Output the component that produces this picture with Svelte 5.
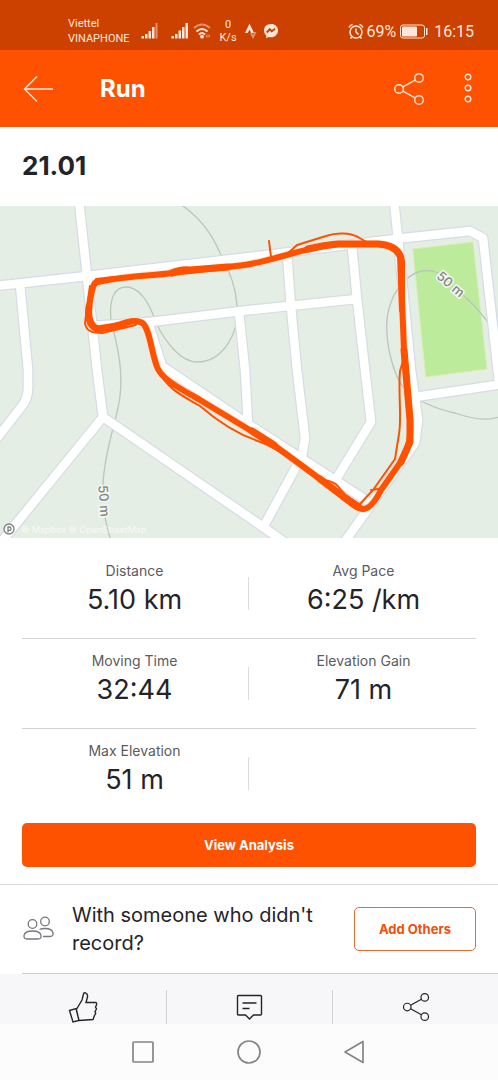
<script lang="ts">
    type Stat = { label: string; value: string };

    const rows: (Stat | null)[][] = [
        [{ label: 'Distance', value: '5.10 km' }, { label: 'Avg Pace', value: '6:25 /km' }],
        [{ label: 'Moving Time', value: '32:44' }, { label: 'Elevation Gain', value: '71 m' }],
        [{ label: 'Max Elevation', value: '51 m' }, null]
    ];

    const roads = [
        'M-5 80L87 70L250 51L395 33L470 25L483 32L499 175',
        'M79 -5L87 70L97 164L103 211L-2 340',
        'M20 78L28 164V182Q28 192 22 200L-6 236',
        'M103 211L250 312L290 340',
        'M92 120L150 116L250 104L357 93',
        'M148 116L162 160L251 220L366 294',
        'M239 106L245 164L248 218',
        'M287 48L291 101L297 164L305 232L302 250L265 318',
        'M352 40L357 93L365 164L371 216L338 270',
        'M394 -5L398 33L411 164L418 214L415 237L343 338',
        'M415 191L503 178'
    ];

    const loop =
        'M95 77C112 71 150 70 173 67C203 63 235 61 250 58C275 54 310 40 338 38H378C392 39 400 43 402 55L402 94L404 144L410 214C411 231 410 239 400 257L381 284C376 294 370 303 363 303C355 303 345 291 328 279L301 259L271 237L248 223L200 194C183 184 164 175 158 163C151 149 150 117 140 116C131 112 118 121 100 123C90 123 87 114 89 101C91 91 91 83 95 77z';
</script>

{#snippet shareIcon()}
    <svg class="share" width="32" height="34" viewBox="0 0 32 34" aria-hidden="true">
        <circle cx="6" cy="17" r="4.3" />
        <circle cx="26" cy="6" r="4.3" />
        <circle cx="26" cy="28" r="4.3" />
        <path d="M9.8 14.9L22.2 8.1M9.8 19.1L22.2 25.9" />
    </svg>
{/snippet}

<div class="status">
    <div class="carriers">
        <span>Viettel</span>
        <span>VINAPHONE</span>
    </div>
    <svg class="signal" width="18" height="16" viewBox="0 0 18 16" aria-hidden="true">
        <path d="M0.5 13h2.5v2.500h-2.500zM4 11h2.500v4.500h-2.500zM7.500 8h2.500v7.500h-2.500zM11 4h2.500v11.500h-2.500z" />
        <path class="dim" d="M14.500 0h2v15.500h-2z" />
    </svg>
    <svg class="signal second" width="18" height="16" viewBox="0 0 18 16" aria-hidden="true">
        <path d="M0.5 13h2.500v2.500h-2.500zM4 11h2.500v4.500h-2.500zM7.500 7.500h2.500v8h-2.500zM11 4h2.500v11.500h-2.500zM14.500 0h2.500v15.500h-2.500z" />
    </svg>
    <svg width="20" height="16" viewBox="0 0 20 16" aria-hidden="true">
        <path class="line dim" d="M1 5Q9 -2 17 5" />
        <path class="line" d="M3.500 8.500Q9 3.500 14.500 8.500M6 11.500Q9 8.500 12 11.500" />
        <circle cx="9" cy="13.700" r="1.900" />
        <path class="dim" d="M12.500 13l2-2v4zM17.500 13l-2-2v4z" />
    </svg>
    <div class="speed">
        <span>0</span>
        <span>K/s</span>
    </div>
    <svg class="strava" width="12" height="16" viewBox="0 0 12 16" aria-hidden="true">
        <path d="M0 10L4.500 0.500L9 10H6.200L4.500 6.500L2.800 10z" />
        <path class="dim" d="M5 10H7L8 12L9.300 9H11.500L8 16z" />
    </svg>
    <svg width="16" height="16" viewBox="0 0 16 16" aria-hidden="true">
        <path d="M8 1C4 1 1 3.800 1 7.500C1 9.600 1.900 11.300 3.300 12.500V15.200L5.500 14C6.300 14.200 7.100 14.300 8 14.300C12 14.300 15 11.400 15 7.500S12 1 8 1z" />
        <path class="bolt" d="M3.800 9.500L6.700 6.300L8.800 8.300L12 5.800" />
    </svg>
    <div class="right">
        <svg class="alarm" width="16" height="17" viewBox="0 0 16 17" aria-hidden="true">
            <circle cx="8" cy="9" r="6" />
            <path d="M8 5.500V9L10.500 11.500M1 4.500Q2 2 4.500 1.500M15 4.500Q14 2 11.500 1.500M4 13.500L2.500 15.500M12 13.500L13.500 15.500" />
        </svg>
        <span>69%</span>
        <svg class="battery" width="28" height="15" viewBox="0 0 28 15" aria-hidden="true">
            <rect class="case" x="0.5" y="1" width="24" height="13" rx="2.5" />
            <rect x="2" y="2.5" width="15" height="10" rx="1" />
            <path d="M26 4h1.500v7h-1.500z" />
        </svg>
        <span class="time">16:15</span>
    </div>
</div>

<header>
    <button aria-label="Back">
        <svg width="32" height="28" viewBox="0 0 32 28" aria-hidden="true">
            <path d="M30 14H1.500M14 1.500L1.500 14L14 26.500" />
        </svg>
    </button>
    <h1>Run</h1>
    <button aria-label="Share">{@render shareIcon()}</button>
    <button class="more" aria-label="More options">
        <svg width="12" height="32" viewBox="0 0 12 32" aria-hidden="true">
            <circle cx="6" cy="4" r="2.8" />
            <circle cx="6" cy="15" r="2.8" />
            <circle cx="6" cy="26" r="2.8" />
        </svg>
    </button>
</header>

<main>
    <h2>21.01</h2>

    <svg class="map" viewBox="0 0 498 332" role="img" aria-label="Route map">
        <path class="pitch" d="M413 43L473 36L487 163L426 171z" />
        <g class="contour">
            <path d="M183 0C200 12 212 28 220 47C231 67 236 84 237 99C240 128 222 156 197 156C181 156 166 137 156 117C149 94 138 81 126 81C113 81 109 96 111 113C114 129 124 159 120 190C118 211 104 245 103 279M105 312L110 332" />
            <path d="M438 67C427 62 416 65 408 72C392 84 385 108 387 128C388 146 395 171 403 181C413 193 435 203 455 207C472 213 487 215 499 211M463 89C473 97 480 106 487 115" />
        </g>
        {#each roads as d}
            <path class="casing" {d} />
        {/each}
        {#each roads as d}
            <path class="road" {d} />
        {/each}
        <g class="contour-label">
            <text transform="translate(450 79) rotate(40)">50 m</text>
            <text transform="translate(103 295) rotate(86)">50 m</text>
        </g>
        <path class="halo" d={loop} />
        <g class="route">
            <path class="main" d={loop} />
            <path class="heavy" d="M172 67Q180 63 190 64L228 61M308 43Q325 39 338 38H378Q395 39 400 50M404 144L410 214V236L401 256M252 225L274 239M320 273L345 292L359 301M89 101Q87 118 97 123L124 119" />
            <path d="M92 80L96 73L125 70M90 80L85 117C86 126 94 127 102 127L136 119M158 164C168 184 183 190 200 200C222 219 240 229 258 235C282 244 300 260 318 274" />
            <path d="M271 51L269 35M287 48L297 39L326 30C337 26 350 27 358 31L368 37M398 51L400 105M403 155L400 165C398 188 402 210 399 228L395 253L373 284L360 298M325 274C342 277 338 286 350 292L360 299M371 284Q378 284 384 281" />
        </g>
        <g class="attribution">
            <circle cx="9" cy="323" r="5" />
            <path d="M8 326V321H9.500Q11 321 11 322.700T9.500 324.300H8" />
            <text x="21" y="327">© Mapbox © OpenStreetMap</text>
        </g>
    </svg>

    <section class="stats">
        {#each rows as row}
            <div class="row">
                {#each row as stat}
                    <div class="stat">
                        {#if stat}
                            <span class="label">{stat.label}</span>
                            <span class="value">{stat.value}</span>
                        {/if}
                    </div>
                {/each}
            </div>
        {/each}
    </section>

    <div class="analysis">
        <button>View Analysis</button>
    </div>

    <section class="others">
        <svg width="32" height="26" viewBox="0 0 32 26" aria-hidden="true">
            <circle cx="10.5" cy="8" r="4.3" />
            <circle cx="23" cy="5.500" r="4.300" />
            <path d="M5 23H16Q19.500 23 19 19.500C18.500 16.500 15 15 10.500 15S2.500 16.500 2 19.500Q1.700 23 5 23z" />
            <path d="M17.500 13.500C19 12.700 21 12.500 23 12.500C28 12.500 30.500 14 31 17Q31.500 20.500 28 20.500H21" />
        </svg>
        <p>With someone who didn't record?</p>
        <button>Add Others</button>
    </section>
</main>

<footer>
    <button aria-label="Give kudos">
        <svg width="30" height="32" viewBox="0 0 30 32" aria-hidden="true">
            <path d="M9 17.500L14 9L15.500 3Q16 1.200 17.500 1.800Q20 3 19.500 6L18 11.500L27.500 11.500Q29 11.700 28.500 14L27.500 16L28.500 18L27 20.500L27.700 22.500L26.500 24.500L25 28.500L11 29.500L8.200 17.700zM1.500 19.500L8 17.700L11 29.500L5 31z" />
        </svg>
    </button>
    <button aria-label="Comment">
        <svg width="28" height="28" viewBox="0 0 28 28" aria-hidden="true">
            <path d="M2.500 2.500H24.500Q25.500 2.500 25.500 3.500V21Q25.500 22 24.500 22H17.500L13.500 26L9.500 22H2.500Q1.500 22 1.500 21V3.500Q1.500 2.500 2.500 2.500zM6.500 10H20.500M6.500 15.500H13.500" />
        </svg>
    </button>
    <button aria-label="Share activity">{@render shareIcon()}</button>
</footer>

<nav>
    <button aria-label="Recent apps">
        <svg width="26" height="26" viewBox="0 0 26 26" aria-hidden="true">
            <rect x="3" y="3" width="20" height="20" rx="1" />
        </svg>
    </button>
    <button aria-label="Home">
        <svg width="26" height="26" viewBox="0 0 26 26" aria-hidden="true">
            <circle cx="13" cy="13" r="11" />
        </svg>
    </button>
    <button aria-label="Navigate back">
        <svg width="26" height="26" viewBox="0 0 26 26" aria-hidden="true">
            <path d="M3 13L21 2.500V23.500z" />
        </svg>
    </button>
</nav>

<style>
    :global(body) {
        background: #fff;
        color: #242428;
        font-family: Inter, 'Liberation Sans', sans-serif;
    }

    button {
        background: none;
        border: none;
        padding: 0;
        color: inherit;
        font-family: inherit;
        cursor: pointer;
    }

    svg {
        display: block;
        flex-shrink: 0;
    }

    h1,
    h2,
    p {
        margin: 0;
    }

    .status {
        display: flex;
        align-items: center;
        height: 38px;
        padding: 12px 24px 0 68px;
        background: #cc4100;
        color: #ffe6da;
        font-family: Roboto, sans-serif;
    }

    .status svg {
        fill: #ffe6da;
    }

    .status .dim {
        opacity: 0.5;
    }

    .status .line {
        fill: none;
        stroke: #ffe6da;
        stroke-width: 2;
    }

    .status .bolt {
        fill: none;
        stroke: #cc4100;
        stroke-width: 2;
    }

    .carriers,
    .speed {
        display: flex;
        flex-direction: column;
        font-size: 11px;
        line-height: 15px;
    }

    .carriers {
        width: 73px;
    }

    .speed {
        align-items: center;
        width: 18px;
        margin: 0 8px 0 6px;
        line-height: 13px;
    }

    .signal.second {
        margin: 0 4px 0 12px;
    }

    .strava {
        margin-right: 6px;
    }

    .right {
        display: flex;
        align-items: center;
        margin-left: auto;
        font-size: 16px;
    }

    .right .alarm,
    .right .case {
        fill: none;
        stroke: #ffe6da;
    }

    .right .alarm {
        margin-right: 2px;
        stroke-width: 1.5;
    }

    .battery {
        margin: 0 6px 0 4px;
    }

    header {
        display: flex;
        align-items: center;
        height: 77px;
        padding: 0 24px 0 23px;
        background: #fe5200;
        color: #fff;
    }

    header svg {
        fill: none;
        stroke: #ffe6da;
        stroke-width: 1.4;
    }

    h1 {
        flex: 1;
        margin-left: 45px;
        font-size: 24px;
        line-height: 32px;
    }

    .more {
        margin-left: 37px;
    }

    h2 {
        padding: 23px 22px 24px;
        font-size: 26px;
        line-height: 32px;
    }

    .map {
        width: 100%;
        background: #e5eee5;
    }

    .map path {
        fill: none;
        stroke-linejoin: round;
        stroke-linecap: round;
    }

    .map .pitch {
        fill: #bbeb9b;
        stroke: #d9eeb0;
    }

    .contour {
        stroke: #bac5bb;
        stroke-width: 1.3;
    }

    .map .casing {
        stroke: #d7dbe5;
        stroke-width: 11;
    }

    .map .road {
        stroke: #fff;
        stroke-width: 8.6;
    }

    .contour-label {
        fill: #808682;
        stroke: #f2f6f1;
        stroke-width: 3;
        paint-order: stroke;
        font-size: 13px;
        font-weight: 500;
        text-anchor: middle;
        dominant-baseline: middle;
    }

    .halo {
        stroke: #ffe0cc;
        stroke-width: 7.5;
    }

    .route {
        stroke: #fe5200;
        stroke-width: 2;
    }

    .route .main {
        stroke-width: 6;
    }

    .route .heavy {
        stroke-width: 7;
    }

    .attribution {
        fill: #fff;
        fill-opacity: 0.7;
        font-size: 9px;
    }

    .attribution circle,
    .attribution path {
        stroke: #7c827e;
        stroke-width: 1.3;
    }

    .stats {
        padding: 11px 22px 0;
    }

    .row {
        display: grid;
        grid-template-columns: 1fr 1fr;
        column-gap: 4px;
        height: 89px;
    }

    .row + .row {
        border-top: 1px solid #d3d3d7;
    }

    .stat {
        position: relative;
        display: flex;
        flex-direction: column;
        align-items: center;
        gap: 3px;
        padding-top: 13px;
    }

    .stat:first-child::after {
        content: '';
        position: absolute;
        top: 28px;
        right: -2px;
        width: 1px;
        height: 33px;
        background: #dcdce0;
    }

    .label {
        font-size: 14px;
        line-height: 18px;
        color: #5b5b60;
    }

    .value {
        font-size: 27px;
        line-height: 34px;
    }

    .analysis {
        padding: 5px 22px 17px;
        border-bottom: 1px solid #dcdcde;
    }

    .analysis button {
        width: 100%;
        height: 44px;
        border-radius: 5px;
        background: #fe5200;
        color: #fff;
        font-size: 13px;
        font-weight: 700;
    }

    .others {
        display: flex;
        align-items: center;
        margin-left: 22px;
        padding: 16px 22px 16px 0;
        border-bottom: 1px solid #cfcfd3;
    }

    .others svg {
        fill: none;
        stroke: #77777d;
        stroke-width: 1.3;
    }

    .others p {
        flex: 1;
        margin: 0 16px 0 18px;
        font-size: 20px;
        line-height: 28px;
    }

    .others button {
        width: 122px;
        height: 44px;
        border: 1px solid #ea6a34;
        border-radius: 5px;
        color: #f0500a;
        font-size: 13px;
        font-weight: 700;
    }

    footer {
        display: grid;
        grid-template-columns: repeat(3, 1fr);
        padding-top: 16px;
        background: #f7f7fa;
    }

    footer button {
        display: flex;
        align-items: center;
        justify-content: center;
        height: 34px;
    }

    footer button + button {
        border-left: 1px solid #d0d0d5;
    }

    footer svg {
        fill: none;
        stroke: #242428;
        stroke-width: 1.4;
    }

    footer .share {
        width: 28px;
        height: 30px;
    }

    nav {
        display: flex;
        align-items: center;
        justify-content: center;
        gap: 80px;
        height: 56px;
        background: #fcfcfc;
    }

    nav svg {
        fill: none;
        stroke: #858585;
        stroke-width: 1.7;
        stroke-linejoin: round;
    }
</style>
